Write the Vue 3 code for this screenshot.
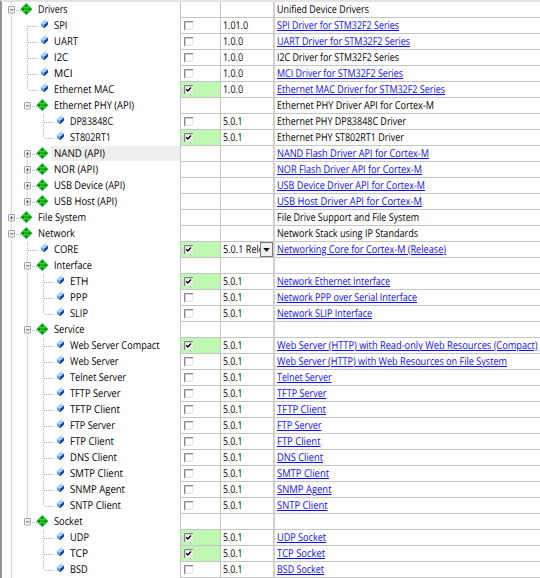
<script setup>
const raw = [
  [0, 'Drivers', '-', '', '', 'Unified Device Drivers', 0, 29.5, 92],
  [1, 'SPI', '', 'o', '1.01.0', 'SPI Driver for STM32F2 Series', 1, 13.5, 122],
  [1, 'UART', '', 'o', '1.0.0', 'UART Driver for STM32F2 Series', 1, 24, 133],
  [1, 'I2C', '', 'o', '1.0.0', 'I2C Driver for STM32F2 Series', 0, 14, 122],
  [1, 'MCI', '', 'o', '1.0.0', 'MCI Driver for STM32F2 Series', 1, 18.5, 126],
  [1, 'Ethernet MAC', '', 'x', '1.0.0', 'Ethernet MAC Driver for STM32F2 Series', 1, 60, 168],
  [1, 'Ethernet PHY (API)', '-', '', '', 'Ethernet PHY Driver API for Cortex-M', 0, 80, 157],
  [2, 'DP83848C', '', 'o', '5.0.1', 'Ethernet PHY DP83848C Driver', 0, 43, 129],
  [2, 'ST802RT1', '', 'x', '5.0.1', 'Ethernet PHY ST802RT1 Driver', 0, 41, 127],
  [1, 'NAND (API)', '+', '', '', 'NAND Flash Driver API for Cortex-M', 1, 51, 152],
  [1, 'NOR (API)', '+', '', '', 'NOR Flash Driver API for Cortex-M', 1, 44, 145],
  [1, 'USB Device (API)', '+', '', '', 'USB Device Driver API for Cortex-M', 1, 71, 148],
  [1, 'USB Host (API)', '+', '', '', 'USB Host Driver API for Cortex-M', 1, 63, 145],
  [0, 'File System', '+', '', '', 'File Drive Support and File System', 0, 48, 142],
  [0, 'Network', '-', '', '', 'Network Stack using IP Standards', 0, 37, 141],
  [1, 'CORE', '', 'x', '5.0.1 Rele', 'Networking Core for Cortex-M (Release)', 1, 24.5, 169],
  [1, 'Interface', '-', '', '', '', 0, 38, 0],
  [2, 'ETH', '', 'x', '5.0.1', 'Network Ethernet Interface', 1, 18.5, 113],
  [2, 'PPP', '', 'o', '5.0.1', 'Network PPP over Serial Interface', 1, 17.5, 140],
  [2, 'SLIP', '', 'o', '5.0.1', 'Network SLIP Interface', 1, 18, 95],
  [1, 'Service', '-', '', '', '', 0, 30.5, 0],
  [2, 'Web Server Compact', '', 'x', '5.0.1', 'Web Server (HTTP) with Read-only Web Resources (Compact)', 1, 89.5, 260.5],
  [2, 'Web Server', '', 'o', '5.0.1', 'Web Server (HTTP) with Web Resources on File System', 1, 48.5, 230],
  [2, 'Telnet Server', '', 'o', '5.0.1', 'Telnet Server', 1, 56, 54.5],
  [2, 'TFTP Server', '', 'o', '5.0.1', 'TFTP Server', 1, 50.5, 49.5],
  [2, 'TFTP Client', '', 'o', '5.0.1', 'TFTP Client', 1, 50, 49],
  [2, 'FTP Server', '', 'o', '5.0.1', 'FTP Server', 1, 45, 44.5],
  [2, 'FTP Client', '', 'o', '5.0.1', 'FTP Client', 1, 44, 43.5],
  [2, 'DNS Client', '', 'o', '5.0.1', 'DNS Client', 1, 47, 46],
  [2, 'SMTP Client', '', 'o', '5.0.1', 'SMTP Client', 1, 53, 52],
  [2, 'SNMP Agent', '', 'o', '5.0.1', 'SNMP Agent', 1, 55, 54.5],
  [2, 'SNTP Client', '', 'o', '5.0.1', 'SNTP Client', 1, 51, 50.5],
  [1, 'Socket', '-', '', '', '', 0, 28.5, 0],
  [2, 'UDP', '', 'x', '5.0.1', 'UDP Socket', 1, 19, 49],
  [2, 'TCP', '', 'x', '5.0.1', 'TCP Socket', 1, 18, 48],
  [2, 'BSD', '', 'o', '5.0.1', 'BSD Socket', 1, 17.5, 47],
]

const versionWidths = { '1.01.0': 25, '1.0.0': 20, '5.0.1': 19.5, '5.0.1 Rele': 41 }

// Labels are condensed horizontally so each one fills its intended width.
const ctx = document.createElement('canvas').getContext('2d')
ctx.font = '10.8px "Open Sans"'
const condense = (text, width) =>
  text ? `scaleX(${(width / ctx.measureText(text).width).toFixed(4)})` : 'none'

// A guide continues at a level while a later sibling exists before the tree returns to a shallower level.
const continues = (i, level) => {
  for (let j = i + 1; j < raw.length; j++) {
    if (raw[j][0] < level) return false
    if (raw[j][0] === level) return true
  }
  return level === 0
}

// The driver leaves, the PHY group and the closed API groups are drawn as separate runs.
const guideAt = (i, l, depth) => {
  const g = { up: l < depth ? continues(i, l) : true, down: continues(i, l), own: l === depth }
  if (l === 1) {
    if (i === 1 || i === 9) g.up = false
    if (i === 5) g.down = false
    if (i >= 6 && i <= 8) g.up = g.down = false
  }
  return g
}

const rows = raw.map(([depth, name, toggle, check, version, desc, link, nameWidth, descWidth], i) => ({
  depth, name, toggle, check, version, desc, link,
  guides: Array.from({ length: depth + 1 }, (_, l) => guideAt(i, l, depth)),
  nameScale: condense(name, nameWidth),
  versionScale: condense(version, versionWidths[version]),
  descScale: condense(desc, descWidth),
}))
</script>

<template>
  <div class="grid">
    <div v-for="row in rows" :key="row.name" class="row">
      <div class="cell tree">
        <span v-for="(g, l) in row.guides" :key="l" class="guide">
          <svg width="16" height="16" viewBox="0 0 16 16">
            <path v-if="g.up" d="M3.5 0V8" class="dots" />
            <path v-if="g.down" d="M3.5 8V16" class="dots" />
            <path v-if="g.own" d="M4 8.5H14" class="dots" />
            <g v-if="g.own && row.toggle">
              <rect x="0.5" y="4.5" width="6" height="6.5" rx="0.6" fill="#f4f4f4" stroke="#a0a0a0" />
              <path d="M2 7.8H5.2" stroke="#4a5cae" />
              <path v-if="row.toggle === '+'" d="M3.6 6.2V9.4" stroke="#4a5cae" />
            </g>
          </svg>
        </span>
        <svg class="icon" width="13" height="16" viewBox="0 0 13 16">
          <g v-if="row.toggle">
            <path d="M5.3 1.6L10.9 7.2L5.3 12.8L-0.3 7.2Z" fill="#14e41c" stroke="#0a8a10" stroke-width="0.8" />
            <path d="M5.3 3.2v1.9M5.3 9.3v1.9M1.3 7.2h1.9M7.4 7.2h1.9" stroke="#063b08" stroke-width="1.5" />
            <path d="M3.9 5.8l2.8 2.8M6.7 5.8l-2.8 2.8" stroke="#0a7a10" stroke-width="0.7" />
          </g>
          <g v-else>
            <path d="M7.6 2L10.9 3.9V6.6L7.1 10.3L4 8.2V5.5Z" fill="#2668c4" />
            <path d="M7.6 2L10.7 3.8L7 7.2L4 5.4Z" fill="#a9d9fb" />
            <path d="M4 5.4L7 7.2V10.2L4 8.2Z" fill="#64a8e8" />
            <path d="M10.9 3.8V6.6L7.1 10.3V7.1Z" fill="#123f98" />
          </g>
        </svg>
        <span class="name" :class="{ current: row.name === 'NAND (API)' }">
          <span class="label" :style="{ transform: row.nameScale }">{{ row.name }}</span>
        </span>
      </div>
      <div class="cell select" :class="{ on: row.check === 'x' }">
        <svg v-if="row.check" width="9" height="9" viewBox="0 0 9 9">
          <rect width="9" height="9" fill="#fff" />
          <path d="M0.5 9V0.5H9" fill="none" stroke="#858585" />
          <path d="M1.5 8V1.5H8" fill="none" stroke="#bbb" stroke-width="0.6" />
          <path d="M1 8.5H8.5V1" fill="none" stroke="#e8e6e3" />
          <path v-if="row.check === 'x'" d="M2.2 4.2L3.8 6L7 2.6" fill="none" stroke="#000" stroke-width="1.5" />
        </svg>
      </div>
      <div class="cell version">
        <span class="label" :style="{ transform: row.versionScale }">{{ row.version }}</span>
        <button v-if="row.name === 'CORE'" class="drop">
          <svg width="7" height="4" viewBox="0 0 7 4"><path d="M0.3 0H6.7L3.5 3.7Z" fill="#000" /></svg>
        </button>
      </div>
      <div class="cell desc">
        <span class="label" :class="{ link: row.link }" :style="{ transform: row.descScale }">{{ row.desc }}</span>
      </div>
    </div>
  </div>
</template>

<style>
body { background: #fff; overflow: hidden; }
</style>

<style scoped>
.grid {
  box-sizing: border-box;
  width: 540px;
  height: 578px;
  overflow: hidden;
  border-left: 2px solid #929292;
  border-top: 2px solid #e4e4e4;
  font: 10.8px/15px "Open Sans", "Noto Sans", sans-serif;
  text-rendering: geometricPrecision;
  color: #000;
  white-space: nowrap;
}
.row {
  display: grid;
  grid-template-columns: 179px 40px 54px 1fr;
  height: 16px;
}
.cell {
  box-sizing: border-box;
  min-width: 0;
  height: 16px;
  display: flex;
  align-items: center;
  overflow: hidden;
}
.tree { padding-left: 6px; border-right: 1px solid #c4c4c4; }
.guide { width: 16px; height: 16px; flex: none; }
.guide svg { display: block; }
.dots { stroke: #b8b8b8; stroke-width: 1; stroke-dasharray: 1 1; fill: none; }
.icon { flex: none; margin-left: -3px; overflow: visible; }
.label { display: block; flex: none; width: max-content; transform-origin: 0 50%; }
.name { flex: 1; align-self: flex-start; height: 15px; line-height: 16px; margin-left: 1px; padding-left: 2.6px; }
.current { background: #efefef; }
.select { padding-left: 3px; border-right: 1px solid #c4c4c4; border-bottom: 1px solid #c4c4c4; }
.select.on { background: #bff8b3; }
.version { position: relative; padding-left: 2.4px; border-right: 2px solid #d0d0d0; border-bottom: 1px solid #c4c4c4; }
.drop {
  position: absolute;
  right: 0;
  top: 0;
  width: 13px;
  height: 15px;
  padding: 0;
  display: flex;
  align-items: center;
  justify-content: center;
  background: #efefef;
  border: 1px solid #777;
}
.desc { padding-left: 2px; border-bottom: 1px solid #c4c4c4; }
.link { color: #0c0cf5; text-decoration: underline; text-underline-offset: 1px; text-decoration-thickness: 1px; }
</style>
